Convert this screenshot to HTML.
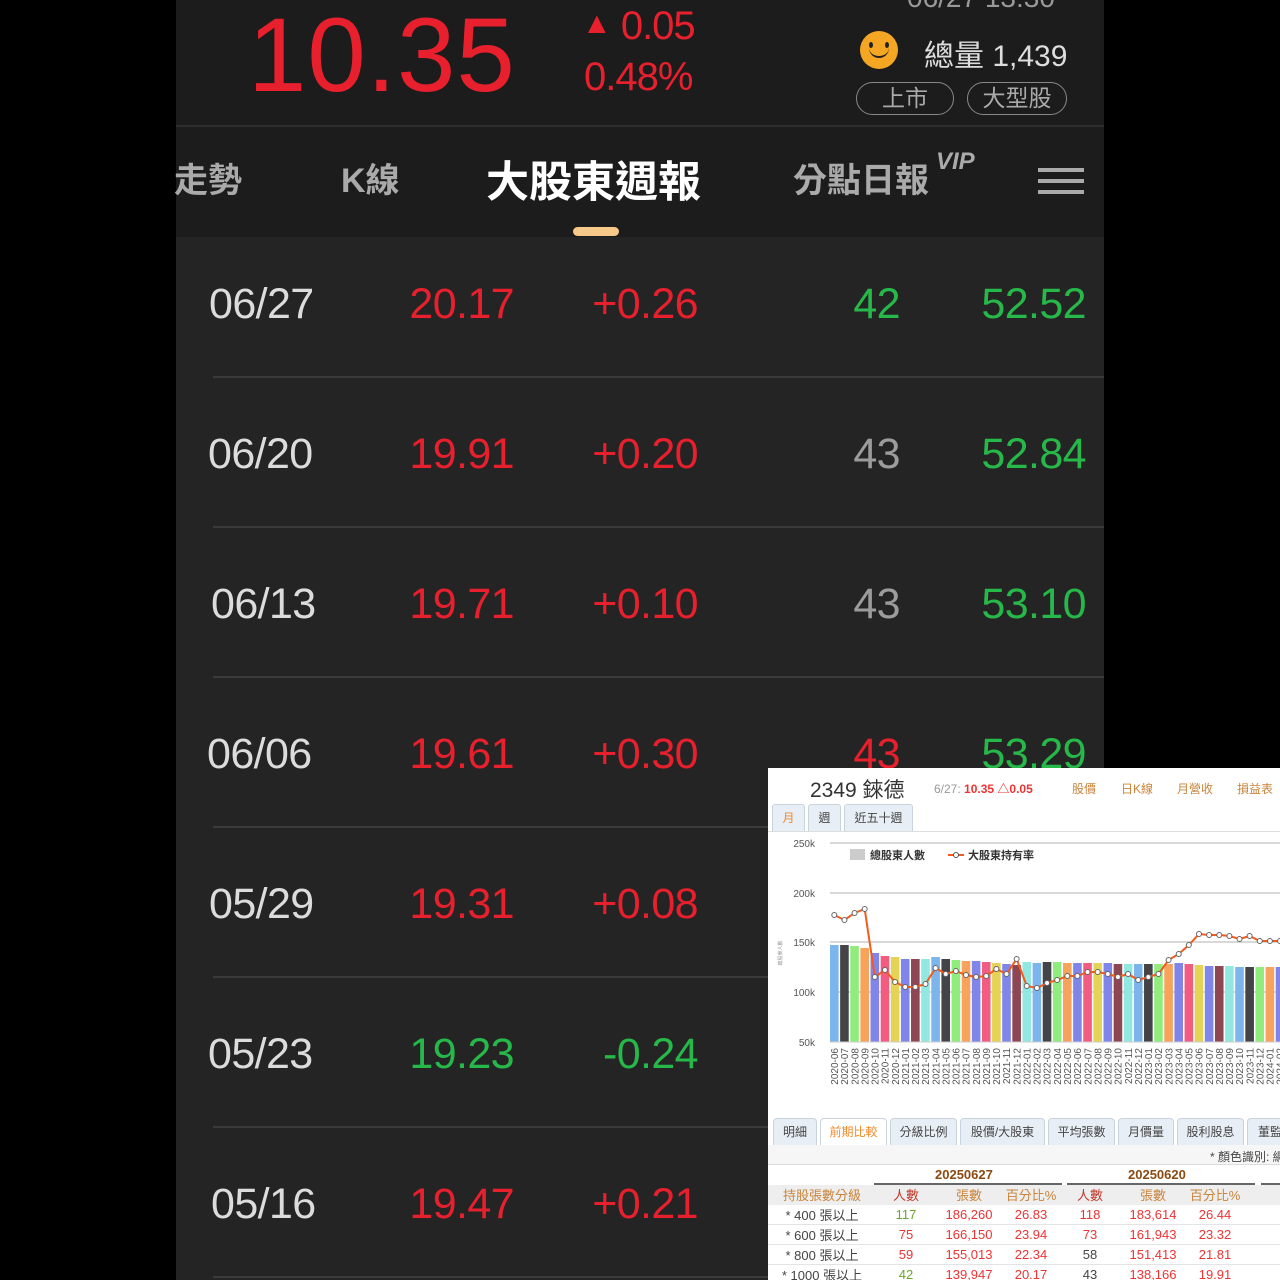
<!DOCTYPE html>
<html><head><meta charset="utf-8"><style>
*{margin:0;padding:0;box-sizing:border-box}
html{overflow:hidden;height:1280px}
body{width:1280px;height:1280px;background:#000;position:relative;overflow:hidden;font-family:"Liberation Sans","Noto Sans CJK TC",sans-serif}
.abs{position:absolute;white-space:nowrap}
#panel{position:absolute;left:176px;top:0;width:928px;height:1280px;background:#242424}
#top{position:absolute;left:0;top:0;width:928px;height:237px;background:#1c1c1c}
.red{color:#e8202e}.grn{color:#27b84a}.gry{color:#9c9c9c}.dt{color:#dcdcdc}
.row{position:absolute;left:0;width:928px;height:150px;font-size:43px;letter-spacing:-0.6px}
.row span{position:absolute;top:43px}
.sep{position:absolute;height:2px;background:#3a3a3a}
#w{position:absolute;left:768px;top:768px;width:512px;height:512px;background:#fff;overflow:hidden;font-family:"Liberation Sans","Noto Sans CJK TC",sans-serif}
.tab{position:absolute;top:1118px;height:28px;border:1px solid #c9d3df;border-bottom:none;background:#e8eef5;border-radius:4px 4px 0 0;font-size:12px;color:#444;text-align:center;line-height:26px}
td{font-size:13px;text-align:center;height:19.5px;padding:0}
</style></head><body>
<div id="panel"><div id="top"></div></div>
<div class="abs red" style="left:248px;top:-4px;font-size:105px;letter-spacing:1px">10.35</div>
<div class="abs red" style="left:582px;top:4px;font-size:40px;letter-spacing:-1px"><span style="font-size:30px;position:relative;top:-6px">▲</span> 0.05</div>
<div class="abs red" style="left:584px;top:55px;font-size:40px;letter-spacing:-1px">0.48%</div>
<div class="abs" style="left:907px;top:-18px;font-size:28px;color:#999">06/27 13:30</div>
<div class="abs" style="left:860px;top:31px;width:38px;height:38px;border-radius:50%;background:#f5a623"></div>
<div class="abs" style="left:869px;top:42px;width:4px;height:6px;border-radius:50%;background:#222"></div>
<div class="abs" style="left:885px;top:42px;width:4px;height:6px;border-radius:50%;background:#222"></div>
<div class="abs" style="left:869px;top:46px;width:20px;height:12px;border-bottom:2px solid #222;border-radius:0 0 10px 10px"></div>
<div class="abs" style="left:924px;top:31px;font-size:30px;color:#ddd">總量 1,439</div>
<div class="abs" style="left:856px;top:82px;width:98px;height:33px;border:1.5px solid #888;border-radius:17px;color:#aaa;font-size:23px;text-align:center;line-height:30px">上市</div>
<div class="abs" style="left:967px;top:82px;width:100px;height:33px;border:1.5px solid #888;border-radius:17px;color:#aaa;font-size:23px;text-align:center;line-height:30px">大型股</div>
<div class="abs" style="left:176px;top:125px;width:928px;height:2px;background:#2e2e2e"></div>
<div class="abs" style="left:174px;top:160px;font-size:34px;color:#aaa;font-weight:bold;transform:translateY(-7px)">走勢</div>
<div class="abs" style="left:341px;top:160px;font-size:34px;color:#aaa;font-weight:bold;transform:translateY(-7px)">K線</div>
<div class="abs" style="left:486px;top:156px;font-size:43px;color:#fff;font-weight:bold;transform:translateY(-8px)">大股東週報</div>
<div class="abs" style="left:793px;top:160px;font-size:34px;color:#aaa;font-weight:bold;transform:translateY(-7px)">分點日報</div>
<div class="abs" style="left:936px;top:148px;font-size:24px;color:#aaa;font-weight:bold;font-style:italic">VIP</div>
<div class="abs" style="left:1038px;top:168px;width:46px;height:4px;background:#aaa;box-shadow:0 11px 0 #aaa,0 22px 0 #aaa"></div>
<div class="abs" style="left:573px;top:227px;width:46px;height:9px;border-radius:5px;background:#f6c98a"></div>

<div id="rows"></div>

<div id="w">
<div class="abs" style="left:42px;top:6px;font-size:21px;color:#333">2349 錸德</div>
<div class="abs" style="left:166px;top:12px;font-size:12px;color:#999">6/27: <b style="color:#e33">10.35 △0.05</b></div>
<div class="abs" style="left:304px;top:12px;font-size:12px;color:#c9843c">股價</div>
<div class="abs" style="left:353px;top:12px;font-size:12px;color:#c9843c">日K線</div>
<div class="abs" style="left:409px;top:12px;font-size:12px;color:#c9843c">月營收</div>
<div class="abs" style="left:469px;top:12px;font-size:12px;color:#c9843c">損益表</div>
<div class="abs" style="left:4px;top:36px;width:33px;height:27px;background:#e8eef5;border:1px solid #c9d3df;border-bottom:none;border-radius:3px 3px 0 0;font-size:12px;color:#f08a2c;text-align:center;line-height:26px">月</div>
<div class="abs" style="left:40px;top:36px;width:33px;height:27px;background:#e8eef5;border:1px solid #c9d3df;border-bottom:none;border-radius:3px 3px 0 0;font-size:12px;color:#444;text-align:center;line-height:26px">週</div>
<div class="abs" style="left:76px;top:36px;width:69px;height:27px;background:#e8eef5;border:1px solid #c9d3df;border-bottom:none;border-radius:3px 3px 0 0;font-size:12px;color:#444;text-align:center;line-height:26px">近五十週</div>
<div class="abs" style="left:0;top:63px;width:512px;height:1px;background:#ddd"></div>
<svg id="ch" class="abs" style="left:0;top:0" width="512" height="340"></svg>
</div>

<div class="tab" style="left:773px;width:44px">明細</div>
<div class="tab" style="left:820px;width:67px;background:#fff;color:#f08a2c">前期比較</div>
<div class="tab" style="left:890px;width:67px">分級比例</div>
<div class="tab" style="left:960px;width:85px">股價/大股東</div>
<div class="tab" style="left:1048px;width:67px">平均張數</div>
<div class="tab" style="left:1118px;width:56px">月價量</div>
<div class="tab" style="left:1177px;width:67px">股利股息</div>
<div class="tab" style="left:1247px;width:50px;text-align:left;padding-left:10px">董監</div>
<div class="abs" style="left:768px;top:1145px;width:512px;height:20px;background:#f6f6f6;border-bottom:1px solid #ddd"></div>
<div class="abs" style="left:1210px;top:1148px;font-size:12px;color:#444">* 顏色識別: 網</div>
<div class="abs" style="left:935px;top:1167px;font-size:13px;font-weight:bold;color:#8b4a12">20250627</div>
<div class="abs" style="left:1128px;top:1167px;font-size:13px;font-weight:bold;color:#8b4a12">20250620</div>
<div class="abs" style="left:874px;top:1183px;width:188px;height:2px;background:#666"></div>
<div class="abs" style="left:1067px;top:1183px;width:188px;height:2px;background:#666"></div>
<div class="abs" style="left:1261px;top:1183px;width:19px;height:2px;background:#666"></div>
<div class="abs" style="left:768px;top:1185px;width:512px;height:95px;overflow:hidden">
<table style="width:512px;border-collapse:collapse">
<tr style="background:#eee;color:#c9843c"><td style="width:108px">持股張數分級</td><td style="width:60px;color:#c0392b">人數</td><td style="width:66px">張數</td><td style="width:58px">百分比%</td><td style="width:60px;color:#c0392b">人數</td><td style="width:66px">張數</td><td style="width:58px">百分比%</td><td></td></tr>
<tr style="border-bottom:1px solid #e4e4e4"><td style="color:#444">* 400 張以上</td><td style="color:#6aa52c">117</td><td style="color:#e33">186,260</td><td style="color:#e33">26.83</td><td style="color:#e33">118</td><td style="color:#e33">183,614</td><td style="color:#e33">26.44</td><td></td></tr>
<tr style="border-bottom:1px solid #e4e4e4"><td style="color:#444">* 600 張以上</td><td style="color:#e33">75</td><td style="color:#e33">166,150</td><td style="color:#e33">23.94</td><td style="color:#e33">73</td><td style="color:#e33">161,943</td><td style="color:#e33">23.32</td><td></td></tr>
<tr style="border-bottom:1px solid #e4e4e4"><td style="color:#444">* 800 張以上</td><td style="color:#e33">59</td><td style="color:#e33">155,013</td><td style="color:#e33">22.34</td><td style="color:#444">58</td><td style="color:#e33">151,413</td><td style="color:#e33">21.81</td><td></td></tr>
<tr><td style="color:#444">* 1000 張以上</td><td style="color:#6aa52c">42</td><td style="color:#e33">139,947</td><td style="color:#e33">20.17</td><td style="color:#444">43</td><td style="color:#e33">138,166</td><td style="color:#e33">19.91</td><td></td></tr>
</table></div>

<script>
(function(){
var data=[["06/27","20.17","+0.26","42","52.52","r","r","g","g",209],["06/20","19.91","+0.20","43","52.84","r","r","w","g",208],["06/13","19.71","+0.10","43","53.10","r","r","w","g",211],["06/06","19.61","+0.30","43","53.29","r","r","r","g",207],["05/29","19.31","+0.08","","","r","r","w","g",209],["05/23","19.23","-0.24","","","g","g","w","g",208],["05/16","19.47","+0.21","","","r","r","w","g",211]];
var cm={r:"red",g:"grn",w:"gry"};var h="";
data.forEach(function(d,i){var t=237+i*150;
h+='<div class="row" style="left:176px;top:'+t+'px"><span class="dt" style="left:'+(d[9]-176)+'px">'+d[0]+'</span><span class="'+cm[d[5]]+'" style="right:590px">'+d[1]+'</span><span class="'+cm[d[6]]+'" style="right:406px">'+d[2]+'</span>'+(d[3]?'<span class="'+cm[d[7]]+'" style="right:204px">'+d[3]+'</span><span class="'+cm[d[8]]+'" style="right:18px">'+d[4]+'</span>':'')+'</div>';
if(t+139<1280)h+='<div class="sep" style="left:213px;width:891px;top:'+(t+139)+'px"></div>';});
document.getElementById('rows').innerHTML=h;
var v=[147,147,146,144,139,136,135,133,133,133,135,133,132,131,131,130,129,128,127,130,129,130,130,129,129,129,129,129,128,128,128,128,128,128,129,128,127,126,126,126,125,125,125,125,125];
var ly=[915,920,913,909,977,970,982,987,987,984,968,974,971,975,977,976,969,974,959,986,988,983,980,976,976,972,972,974,977,974,980,977,974,960,954,945,934,935,935,936,939,936,941,941,941];
var col=["#7cb5ec","#434348","#90ed7d","#f7a35c","#8085e9","#f15c80","#e4d354","#8085e9","#8d4653","#91e8e1"];
var s='';var oy=768,ox=768;
[[250,843],[200,893],[150,942],[100,992],[50,1042]].forEach(function(g){var y=g[1]-oy;s+='<text x="47" y="'+(y+4)+'" font-size="10" fill="#555" text-anchor="end">'+g[0]+'k</text>';if(g[0]>50)s+='<line x1="62" x2="512" y1="'+y+'" y2="'+y+'" stroke="#ccc" stroke-width="1.5"/>';});
s+='<text transform="translate(14,185) rotate(-90)" font-size="5" fill="#999" text-anchor="middle">總股東人數</text>';
s+='<rect x="82" y="81" width="15" height="11" fill="#ccc"/><text x="102" y="91" font-size="11" font-weight="bold" fill="#333">總股東人數</text>';
s+='<line x1="180" x2="196" y1="87" y2="87" stroke="#f45b1b" stroke-width="2"/><circle cx="188" cy="87" r="2.5" fill="#fff" stroke="#555"/><text x="200" y="91" font-size="11" font-weight="bold" fill="#333">大股東持有率</text>';
var pts=[];var yy=2020,mm=6;
for(var i=0;i<45;i++){var x=830-ox+i*10.13;var bt=1042-(v[i]-50)-oy;
s+='<rect x="'+x.toFixed(2)+'" y="'+bt+'" width="8.6" height="'+(1042-oy-bt)+'" fill="'+col[i%10]+'"/>';
pts.push((x+4.3).toFixed(2)+','+(ly[i]-oy));
var lab=yy+'-'+(mm<10?'0'+mm:mm);
s+='<text transform="translate('+(x+8).toFixed(2)+',280) rotate(-90)" font-size="10" fill="#555" text-anchor="end">'+lab+'</text>';
mm++;if(mm>12){mm=1;yy++;}}
s+='<line x1="62" x2="512" y1="274" y2="274" stroke="#ccc"/>';
s+='<polyline points="'+pts.join(' ')+'" fill="none" stroke="#f45b1b" stroke-width="2"/>';
pts.forEach(function(p){var a=p.split(',');s+='<circle cx="'+a[0]+'" cy="'+a[1]+'" r="2.5" fill="#fff" stroke="#666" stroke-width="1"/>';});
document.getElementById('ch').innerHTML=s;
})();
</script>
</body></html>
